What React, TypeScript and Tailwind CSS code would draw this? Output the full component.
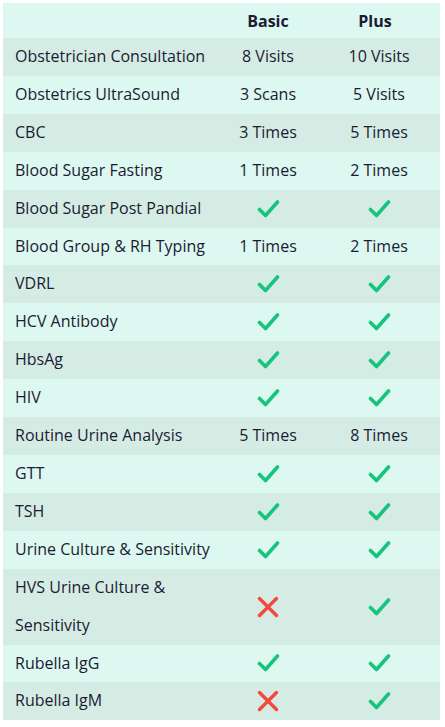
type Val = string | boolean;

interface Row {
  name: string;
  basic: Val;
  plus: Val;
}

const rows: Row[] = [
  { name: "Obstetrician Consultation", basic: "8 Visits", plus: "10 Visits" },
  { name: "Obstetrics UltraSound", basic: "3 Scans", plus: "5 Visits" },
  { name: "CBC", basic: "3 Times", plus: "5 Times" },
  { name: "Blood Sugar Fasting", basic: "1 Times", plus: "2 Times" },
  { name: "Blood Sugar Post Pandial", basic: true, plus: true },
  { name: "Blood Group & RH Typing", basic: "1 Times", plus: "2 Times" },
  { name: "VDRL", basic: true, plus: true },
  { name: "HCV Antibody", basic: true, plus: true },
  { name: "HbsAg", basic: true, plus: true },
  { name: "HIV", basic: true, plus: true },
  { name: "Routine Urine Analysis", basic: "5 Times", plus: "8 Times" },
  { name: "GTT", basic: true, plus: true },
  { name: "TSH", basic: true, plus: true },
  { name: "Urine Culture & Sensitivity", basic: true, plus: true },
  { name: "HVS Urine Culture & Sensitivity", basic: false, plus: true },
  { name: "Rubella IgG", basic: true, plus: true },
  { name: "Rubella IgM", basic: false, plus: true },
];

const Check = () => (
  <svg width="23" height="20" viewBox="0 0 23 20" className="inline-block">
    <path d="M2.5 10.5 L8.5 16.5 L20.5 3" fill="none" stroke="#17c47d" strokeWidth="3.6" strokeLinecap="round" strokeLinejoin="round" />
  </svg>
);

const Cross = () => (
  <svg width="22" height="22" viewBox="0 0 22 22" className="inline-block">
    <path d="M2.5 2.5 L19.5 19.5 M19.5 2.5 L2.5 19.5" fill="none" stroke="#f5473c" strokeWidth="3.4" strokeLinecap="round" />
  </svg>
);

const Cell = ({ v }: { v: Val }) => {
  if (v === true) return <Check />;
  if (v === false) return <Cross />;
  return <span>{v}</span>;
};

export default function App() {
  return (
    <div className="p-[3px] bg-white">
      <div
        className="w-[437px] text-[16px] text-[#1b1b33]"
        style={{ fontFamily: '"Open Sans", sans-serif' }}
      >
        <div className="grid grid-cols-[219px_92px_1fr] h-[35px] items-center bg-[#ddf8f0] font-bold">
          <div />
          <div className="text-center">Basic</div>
          <div className="text-center pr-1">Plus</div>
        </div>
        {rows.map((r, i) => (
          <div
            key={r.name}
            className={`grid grid-cols-[219px_92px_1fr] items-center leading-[37.9px] ${
              i % 2 === 0 ? "bg-[#d5ece5]" : "bg-[#ddf8f0]"
            }`}
          >
            <div className="pl-3 pr-2">{r.name}</div>
            <div className="flex justify-center items-center">
              <Cell v={r.basic} />
            </div>
            <div className="flex justify-center items-center pl-1">
              <Cell v={r.plus} />
            </div>
          </div>
        ))}
      </div>
    </div>
  );
}
